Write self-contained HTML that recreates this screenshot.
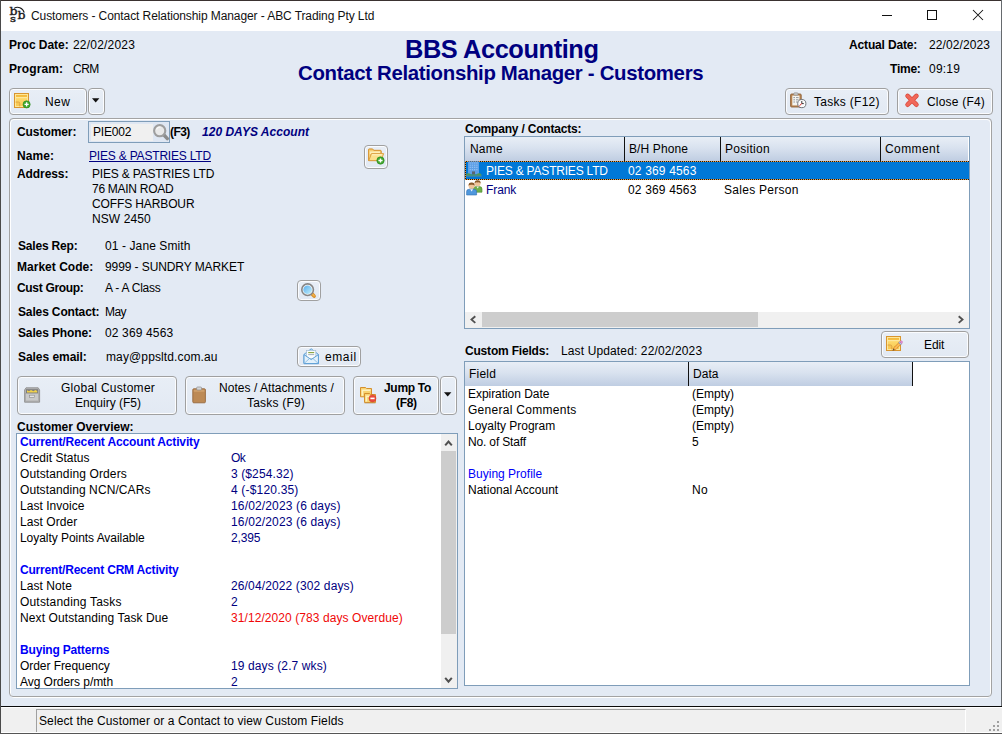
<!DOCTYPE html>
<html>
<head>
<meta charset="utf-8">
<title>Customers - Contact Relationship Manager - ABC Trading Pty Ltd</title>
<style>
*{box-sizing:border-box;margin:0;padding:0}
html,body{width:1002px;height:734px;overflow:hidden;background:#e3eaf4}
body{position:relative;font-family:"Liberation Sans",sans-serif;font-size:12px;color:#000}
.a{position:absolute}
.t{position:absolute;white-space:nowrap;line-height:14px;font-size:12px}
.b{font-weight:bold}
.nv{color:#000080}
.bl{color:#0000f8}
.rd{color:#f00808}
.btn{position:absolute;border:1px solid #a0a0a0;border-radius:4px;background:linear-gradient(#e8eef6,#e2e9f3);box-shadow:inset 0 0 0 1px #fbfcfe}
.hdr{position:absolute;background:linear-gradient(#e8eef6 0%,#d9e2ef 45%,#bfcde2 100%);border-right:1px solid #111}
.lb{position:absolute;border:1px solid #7f9db9;background:#fff}
</style>
</head>
<body>
<!-- window frame -->
<div class="a" style="left:1px;top:1px;width:1000px;height:30px;background:#fff"></div>
<div class="a" style="left:0;top:0;width:1002px;height:1px;background:#3a3230"></div>
<div class="a" style="left:0;top:0;width:1px;height:734px;background:#4a4a4a"></div>
<div class="a" style="left:1001px;top:0;width:1px;height:734px;background:#666a6e"></div>
<div class="a" style="left:0;top:733px;width:1002px;height:1px;background:#555"></div>
<!-- app icon -->
<svg class="a" style="left:9px;top:6px" width="17" height="17" viewBox="0 0 17 17" fill="#1a1a1a" stroke="#1a1a1a" stroke-width="0.35">
<g style="font-family:'DejaVu Serif',serif;font-weight:normal;font-stretch:normal">
<text transform="translate(0.6 8.6) scale(1.2 1)" style="font-size:10.4px">b</text>
<text transform="translate(8.6 12.6) scale(1.2 1)" style="font-size:10.4px">b</text>
<text transform="translate(0.9 15.7) scale(1.3 1)" style="font-size:9px">s</text>
</g>
<path d="M5 2.4 C8.4 0.2 13.8 1.2 15.2 6.6" fill="none" stroke="#1a1a1a" stroke-width="1.1"/>
</svg>
<!-- window controls -->
<div class="a" style="left:882px;top:15px;width:10px;height:1px;background:#111"></div>
<div class="a" style="left:927px;top:10px;width:10px;height:10px;border:1px solid #111"></div>
<svg class="a" style="left:972px;top:9px" width="12" height="12" viewBox="0 0 12 12"><path d="M1 1 L11 11 M11 1 L1 11" stroke="#111" stroke-width="1.05" fill="none"/></svg>

<!-- toolbar buttons -->
<div class="btn" style="left:9px;top:88px;width:78px;height:27px"></div>
<svg class="a" style="left:14px;top:93px" width="17" height="16" viewBox="0 0 17 16">
<defs><linearGradient id="ng" x1="0" y1="0" x2="0" y2="1"><stop offset="0" stop-color="#ffe27c"/><stop offset="1" stop-color="#f9c74c"/></linearGradient></defs><rect x="0.5" y="0.5" width="14" height="14" fill="url(#ng)" stroke="#d8952f"/>
<rect x="1.5" y="1.5" width="12" height="12" fill="none" stroke="#fde79a" stroke-width="1"/>
<rect x="2" y="2.2" width="11" height="1.5" fill="#f2b231"/>
<rect x="2" y="4.3" width="11" height="0.8" fill="#fdeeb4"/>
<path d="M1.6 9 H4.4 Q5.8 9 5.8 10.4 V13.4" fill="#f7c653" stroke="#dba044" stroke-width="0.9"/>
<circle cx="12.6" cy="11.4" r="3.6" fill="#3fa62c" stroke="#2f8c20" stroke-width="0.6"/>
<path d="M12.6 9.3 V13.5 M10.5 11.4 H14.7" stroke="#fff" stroke-width="1.4"/>
</svg>
<div class="btn" style="left:88px;top:88px;width:17px;height:27px"></div>
<svg class="a" style="left:92px;top:98px" width="8" height="5" viewBox="0 0 8 5"><path d="M0 0.3 H7.4 L3.7 4.4 Z" fill="#111"/></svg>
<div class="btn" style="left:785px;top:88px;width:104px;height:27px"></div>
<svg class="a" style="left:790px;top:92px" width="17" height="17" viewBox="0 0 17 17">
<rect x="0.6" y="2" width="10.6" height="13" rx="1" fill="#b98552" stroke="#8f6238" stroke-width="0.9"/>
<rect x="2.3" y="3.6" width="7.2" height="9.8" fill="#f4f4f0"/>
<rect x="3.8" y="0.8" width="4.2" height="2.4" rx="0.8" fill="#c9c9c9" stroke="#8a8a8a" stroke-width="0.6"/>
<path d="M3.4 5.6 H5 M6 5.6 H8.6 M3.4 7.8 H5 M6 7.8 H8.6 M3.4 10 H5 M6 10 H7.4" stroke="#8a8f96" stroke-width="0.9"/>
<circle cx="11.8" cy="11.6" r="4.1" fill="#fbfbfb" stroke="#6f7378" stroke-width="1"/>
<path d="M11.8 9 V11.6 H13.8" stroke="#222" stroke-width="0.9" fill="none"/>
<path d="M11.8 11.6 L9.4 13.8" stroke="#e02020" stroke-width="1"/>
</svg>
<div class="btn" style="left:897px;top:88px;width:96px;height:27px"></div>
<svg class="a" style="left:904px;top:92px" width="16" height="16" viewBox="0 0 16 16" fill="none" stroke-linecap="round"><path d="M3.6 3.9 L12.4 12.7 M12.4 3.9 L3.6 12.7" stroke="#d8473a" stroke-width="4.6"/><path d="M3.6 3.9 L12.4 12.7 M12.4 3.9 L3.6 12.7" stroke="#f0685a" stroke-width="3.2"/></svg>

<!-- main panel frame (etched) -->
<div class="a" style="left:10px;top:119px;width:981px;height:579px;border:1px solid #fff;border-radius:4px"></div>
<div class="a" style="left:9px;top:118px;width:983px;height:579px;border:1px solid #a3a3a3;border-radius:4px"></div>

<!-- customer input -->
<div class="a" style="left:88px;top:121px;width:82px;height:22px;border:1px solid #7f9db9;background:#dfe7f3"></div>
<div class="a" style="left:91px;top:124px;width:62px;height:17px;background:#f0f0f0"></div>
<svg class="a" style="left:152px;top:123px" width="18" height="18" viewBox="0 0 18 18"><path d="M12 12 L15.3 15.6" stroke="#8c8c8c" stroke-width="3.4" stroke-linecap="round"/><circle cx="7.7" cy="7.7" r="5.6" fill="#e9e9e9" stroke="#9e9e9e" stroke-width="2.1"/><path d="M4.6 6.6 A3.4 3.4 0 0 1 8.6 4.2" stroke="#f8f8f8" stroke-width="1.2" fill="none"/></svg>

<!-- folder button -->
<div class="btn" style="left:364px;top:145px;width:24px;height:24px;border-radius:4px"></div>
<svg class="a" style="left:368px;top:148px" width="17" height="17" viewBox="0 0 17 17">
<path d="M0.5 12.6 V1.8 Q0.5 1.1 1.2 1.1 H4.6 L5.8 2.4 H12.4 Q13.1 2.4 13.1 3.1 V5.2" fill="#f3c462" stroke="#d99a3c"/>
<path d="M0.5 12.6 V1.8 Q0.5 1.1 1.2 1.1 H4.6 L5.8 2.4 H12.4 Q13.1 2.4 13.1 3.1 V12.6 Z" fill="#f6cd72" stroke="#d99a3c"/>
<path d="M1.8 3.4 H12 V6 H1.8 Z" fill="#fdeeb8"/>
<path d="M0.8 12.6 L3.4 5.6 H15.6 L13.2 12.6 Z" fill="#fbe08c" stroke="#dca040" stroke-linejoin="round"/>
<path d="M3.9 6.8 H14.2" stroke="#fff3c8" stroke-width="1"/>
<circle cx="12.5" cy="12.5" r="3.7" fill="#3fa62c" stroke="#2d8a1e" stroke-width="0.6"/>
<path d="M12.5 10.4 V14.6 M10.4 12.5 H14.6" stroke="#fff" stroke-width="1.4"/>
</svg>

<!-- search button -->
<div class="btn" style="left:297px;top:280px;width:24px;height:21px;border-radius:4px"></div>
<svg class="a" style="left:300px;top:281px" width="18" height="18" viewBox="0 0 18 18">
<defs><linearGradient id="lg" x1="0" y1="0" x2="1" y2="1"><stop offset="0" stop-color="#58aeee"/><stop offset="1" stop-color="#c4f0fa"/></linearGradient></defs>
<path d="M12.4 13.2 L14.1 15.1" stroke="#d8902c" stroke-width="3.6" stroke-linecap="round"/>
<path d="M12.8 13.5 L14 14.8" stroke="#f4b44a" stroke-width="1.6" stroke-linecap="round"/>
<circle cx="7.6" cy="8.7" r="5.8" fill="#f6f6f6" stroke="#868686" stroke-width="1.6"/>
<circle cx="7.6" cy="8.7" r="4.3" fill="url(#lg)"/>
</svg>

<!-- email button -->
<div class="btn" style="left:297px;top:346px;width:64px;height:21px;border-radius:4px"></div>
<svg class="a" style="left:303px;top:348px" width="17" height="17" viewBox="0 0 17 17">
<path d="M1 6.4 L8.2 0.8 L15.4 6.4 V15.6 H1 Z" fill="#cfe6f8" stroke="#5d9fd6" stroke-width="1"/>
<rect x="3.6" y="2.6" width="9.2" height="8" fill="#fafcfd" stroke="#9fb9cf" stroke-width="0.6"/>
<path d="M5.2 4.6 H11.2" stroke="#8aa23a" stroke-width="1.1"/>
<path d="M5.2 6.6 H11.2" stroke="#9aa7b3" stroke-width="0.9"/>
<path d="M1 6.6 L8.2 11.6 L15.4 6.6 V15.6 H1 Z" fill="#e3f1fb" stroke="#5d9fd6" stroke-width="1" stroke-linejoin="round"/>
<path d="M1.4 15.2 L6.4 10.6 M15 15.2 L10 10.6" stroke="#7db4e0" stroke-width="0.8"/>
</svg>

<!-- big buttons -->
<div class="btn" style="left:17px;top:376px;width:160px;height:39px"></div>
<svg class="a" style="left:24px;top:387px" width="17" height="16" viewBox="0 0 17 16">
<path d="M0.6 3 L2 0.8 H14.2 L15.6 3 V15.2 H0.6 Z" fill="#b5b5b5" stroke="#8e8e8e" stroke-width="0.9"/>
<rect x="2" y="2.2" width="12.2" height="4.2" fill="#7d7d7d"/>
<path d="M3 5.6 V3.2 L5 4.2 L7 3 L9.4 4.2 L11.4 3 L13.2 4 V5.6 Z" fill="#f2d24a"/>
<rect x="1.6" y="6.4" width="13" height="7.6" fill="#c9c9c9" stroke="#a2a2a2" stroke-width="0.6"/>
<rect x="5.6" y="8.2" width="5" height="2.2" fill="#e6e6e6" stroke="#8a8a8a" stroke-width="0.6"/>
</svg>
<div class="btn" style="left:185px;top:376px;width:160px;height:39px"></div>
<svg class="a" style="left:192px;top:386px" width="15" height="18" viewBox="0 0 15 18">
<rect x="0.8" y="2.8" width="12.6" height="14" rx="1" fill="#bd8a55" stroke="#96683c" stroke-width="0.9"/>
<rect x="1.8" y="3.8" width="10.6" height="2" fill="#cfa06c"/>
<rect x="4.6" y="1" width="5" height="3" rx="1" fill="#d6d6d6" stroke="#8d8d8d" stroke-width="0.7"/>
</svg>
<div class="btn" style="left:353px;top:376px;width:86px;height:39px"></div>
<svg class="a" style="left:360px;top:387px" width="17" height="17" viewBox="0 0 17 17">
<path d="M0.5 9.8 V0.5 H5.6 L6.6 1.5 H11.5 V9.8 Z" fill="#f8d370" stroke="#d5902e"/>
<path d="M1.6 2.6 H10.4 V4 H3.2 V8.8 H1.6 Z" fill="#fdf1c0"/>
<path d="M4.5 15.5 V6.5 H9.6 L10.6 7.5 H15.5 V15.5 Z" fill="#f8d370" stroke="#d5902e"/>
<path d="M5.6 8.6 H14.4 V10 H7.2 V14.6 H5.6 Z" fill="#fdf1c0"/>
<path d="M4.5 16.2 H15.5" stroke="#b8a078" stroke-width="0.6"/>
<circle cx="12.5" cy="11.4" r="3.5" fill="#e94b3c" stroke="#d23a2c" stroke-width="0.5"/>
<path d="M10.4 11.4 H14.6" stroke="#fff" stroke-width="1.6"/>
</svg>
<div class="btn" style="left:440px;top:376px;width:17px;height:39px"></div>
<svg class="a" style="left:444px;top:392px" width="8" height="5" viewBox="0 0 8 5"><path d="M0 0.3 H7.4 L3.7 4.4 Z" fill="#111"/></svg>

<!-- overview list -->
<div class="lb" style="left:16px;top:433px;width:442px;height:256px"></div>
<div class="a" style="left:441px;top:434px;width:16px;height:254px;background:#f0f0f0"></div>
<div class="a" style="left:441px;top:451px;width:15px;height:183px;background:#cdcdcd"></div>
<svg class="a" style="left:444px;top:439px" width="9" height="8" viewBox="0 0 9 8"><path d="M1.2 6.3 L4.5 2.5 L7.8 6.3" fill="none" stroke="#505050" stroke-width="2"/></svg>
<svg class="a" style="left:444px;top:676px" width="9" height="8" viewBox="0 0 9 8"><path d="M1.2 1.9 L4.5 5.7 L7.8 1.9" fill="none" stroke="#505050" stroke-width="2"/></svg>

<!-- contacts list -->
<div class="lb" style="left:464px;top:136px;width:506px;height:193px"></div>
<div class="hdr" style="left:465px;top:137px;width:160px;height:24px"></div>
<div class="hdr" style="left:625px;top:137px;width:96px;height:24px"></div>
<div class="hdr" style="left:721px;top:137px;width:160px;height:24px"></div>
<div class="hdr" style="left:881px;top:137px;width:87px;height:24px;border-right:0"></div>
<div class="a" style="left:465px;top:161px;width:504px;height:19px;background:#0078d7"></div>
<div class="a" style="left:465px;top:161px;width:504px;height:1px;background:repeating-linear-gradient(90deg,#f0a040 0 1px,#201810 1px 2px)"></div><div class="a" style="left:465px;top:179px;width:504px;height:1px;background:repeating-linear-gradient(90deg,#f0a040 0 1px,#201810 1px 2px)"></div><div class="a" style="left:465px;top:161px;width:1px;height:19px;background:repeating-linear-gradient(180deg,#f0a040 0 1px,#201810 1px 2px)"></div>
<!-- building icon -->
<svg class="a" style="left:466px;top:161px" width="16" height="16" viewBox="0 0 16 16">
<rect x="2" y="0.4" width="11" height="13" fill="#5e9fe6"/>
<path d="M3.6 2 H11.6 M3.6 4.2 H11.6 M3.6 6.4 H11.6 M3.6 8.6 H11.6" stroke="#8fc0f4" stroke-width="1.1" stroke-dasharray="1.3 0.9"/>
<rect x="6" y="10.4" width="3" height="3.2" fill="#5b6470"/>
<path d="M0 15.4 V13.6 Q1.6 11.6 3.6 12.6 L5 13.6 H10.4 L11.8 12.6 Q13.8 11.6 15.4 13.6 V15.4 Z" fill="#4e9a58"/>
<rect x="0" y="14.6" width="15.6" height="1" fill="#3d7fc4"/>
</svg>
<!-- people icon -->
<svg class="a" style="left:466px;top:179px" width="17" height="17" viewBox="0 0 17 17">
<circle cx="11.6" cy="4.6" r="2.9" fill="#f0c49a"/>
<path d="M8.6 4.4 Q8.6 1 11.6 1.2 Q14.8 1 14.6 4.4 Q13 2.8 11.6 3.4 Q10 2.8 8.6 4.4 Z" fill="#8a5a2a"/>
<path d="M7.4 13.2 V10 Q7.4 7.6 10 7.6 H13.4 Q16 7.6 16 10 V13.2 Z" fill="#6fb04a" stroke="#4e8a30" stroke-width="0.6"/>
<path d="M10.4 7.6 L11.7 9.6 L13 7.6 Z" fill="#f4f7f0"/>
<circle cx="5.6" cy="7" r="3" fill="#f0c49a"/>
<path d="M2.5 6.8 Q2.4 3.2 5.6 3.4 Q8.8 3.2 8.7 6.8 Q7 5.2 5.6 5.8 Q4 5.2 2.5 6.8 Z" fill="#8a5a2a"/>
<path d="M0.6 16 V12.6 Q0.6 10.2 3.4 10.2 H7.8 Q10.6 10.2 10.6 12.6 V16 Z" fill="#4f97dc" stroke="#2f6fb4" stroke-width="0.6"/>
<path d="M4.2 10.2 L5.6 12.4 L7 10.2 Z" fill="#f2f6fb"/>
</svg>
<!-- h scrollbar -->
<div class="a" style="left:465px;top:312px;width:504px;height:16px;background:#f0f0f0"></div>
<div class="a" style="left:482px;top:312px;width:276px;height:15px;background:#cdcdcd"></div>
<svg class="a" style="left:469px;top:315px" width="8" height="10" viewBox="0 0 8 10"><path d="M6.3 1.3 L2.5 4.6 L6.3 7.9" fill="none" stroke="#505050" stroke-width="1.9"/></svg>
<svg class="a" style="left:957px;top:315px" width="8" height="10" viewBox="0 0 8 10"><path d="M1.7 1.3 L5.5 4.6 L1.7 7.9" fill="none" stroke="#505050" stroke-width="1.9"/></svg>

<!-- custom fields -->
<div class="btn" style="left:881px;top:331px;width:88px;height:27px"></div>
<svg class="a" style="left:886px;top:336px" width="18" height="16" viewBox="0 0 18 16">
<defs><linearGradient id="ng2" x1="0" y1="0" x2="0" y2="1"><stop offset="0" stop-color="#ffe27c"/><stop offset="1" stop-color="#f9c74c"/></linearGradient></defs><rect x="0.5" y="0.5" width="14" height="14" fill="url(#ng2)" stroke="#d8952f"/>
<rect x="1.5" y="1.5" width="12" height="12" fill="none" stroke="#fde79a" stroke-width="1"/>
<rect x="2" y="2.2" width="11" height="1.5" fill="#f2b231"/>
<rect x="2" y="4.3" width="11" height="0.8" fill="#fdeeb4"/>
<path d="M1.6 9 H4.4 Q5.8 9 5.8 10.4 V13.4" fill="#f7c653" stroke="#dba044" stroke-width="0.9"/>
<path d="M6.6 14.6 L7.6 11.8 L13.4 6 L15.4 8 L9.6 13.8 Z" fill="#f7a83a" stroke="#b06e24" stroke-width="0.7" stroke-dasharray="0.9 0.7"/>
<path d="M8.8 12.6 L14.2 7.2" stroke="#fbc261" stroke-width="1.1"/>
<path d="M12.7 6.7 L13.7 5.7 L15.7 7.7 L14.7 8.7 Z" fill="#b9c7e6" stroke="#5f78b8" stroke-width="0.5"/>
<path d="M13.7 5.7 L14.5 4.9 Q15.3 4.3 16.1 5.1 Q16.9 5.9 16.3 6.9 L15.7 7.7 Z" fill="#e38fd2" stroke="#c070b4" stroke-width="0.4"/>
<path d="M6.6 14.6 L7.4 12.4 L8.9 13.9 Z" fill="#5a5040"/>
</svg>
<div class="lb" style="left:464px;top:361px;width:506px;height:325px"></div>
<div class="hdr" style="left:465px;top:362px;width:224px;height:24px"></div>
<div class="hdr" style="left:689px;top:362px;width:224px;height:24px"></div>

<!-- status bar -->
<div class="a" style="left:1px;top:706px;width:1001px;height:1px;background:#0a0a0a"></div>
<div class="a" style="left:1px;top:707px;width:1001px;height:26px;background:#f0f0f0;border-top:1px solid #fff;border-bottom:1px solid #fff"></div>
<div class="a" style="left:36px;top:709px;width:930px;height:23px;border-left:1px solid #a0a0a0;border-top:1px solid #a0a0a0;border-right:1px solid #fff"></div>
<svg class="a" style="left:989px;top:721px" width="12" height="12" viewBox="0 0 12 12" fill="#a0a0a0"><rect x="8" y="0" width="2" height="2"/><rect x="4" y="4" width="2" height="2"/><rect x="8" y="4" width="2" height="2"/><rect x="0" y="8" width="2" height="2"/><rect x="4" y="8" width="2" height="2"/><rect x="8" y="8" width="2" height="2"/></svg>

<div class="t" style="left:31px;top:8px;letter-spacing:-0.09px;line-height:16px;color:#111">Customers - Contact Relationship Manager - ABC Trading Pty Ltd</div>
<div class="t b" style="left:9px;top:38px;letter-spacing:-0.04px">Proc Date:</div>
<div class="t" style="left:73px;top:38px;letter-spacing:0.20px">22/02/2023</div>
<div class="t b" style="left:9px;top:62px;letter-spacing:0.08px">Program:</div>
<div class="t" style="left:73px;top:62px;letter-spacing:-0.54px">CRM</div>
<div class="t b nv" style="left:405px;top:35px;letter-spacing:-0.42px;font-size:25.4px;line-height:29px">BBS Accounting</div>
<div class="t b nv" style="left:298px;top:61px;letter-spacing:-0.32px;font-size:20.4px;line-height:24px">Contact Relationship Manager - Customers</div>
<div class="t b" style="left:849px;top:38px;letter-spacing:-0.15px">Actual Date:</div>
<div class="t" style="left:929px;top:38px;letter-spacing:0.10px">22/02/2023</div>
<div class="t b" style="left:890px;top:62px;letter-spacing:-0.23px">Time:</div>
<div class="t" style="left:929px;top:62px;letter-spacing:0.23px">09:19</div>
<div class="t" style="left:45px;top:95px;letter-spacing:0.45px">New</div>
<div class="t" style="left:814px;top:95px;letter-spacing:0.29px">Tasks (F12)</div>
<div class="t" style="left:927px;top:95px;letter-spacing:0.20px">Close (F4)</div>
<div class="t b" style="left:17px;top:125px;letter-spacing:-0.07px">Customer:</div>
<div class="t" style="left:93px;top:125px;letter-spacing:-0.18px">PIE002</div>
<div class="t b" style="left:170px;top:125px;letter-spacing:-0.55px">(F3)</div>
<div class="t b nv" style="left:202px;top:125px;letter-spacing:0.02px;font-style:italic">120 DAYS Account</div>
<div class="t b" style="left:17px;top:149px;letter-spacing:0.09px">Name:</div>
<div class="t nv" style="left:89px;top:149px;letter-spacing:-0.19px;text-decoration:underline">PIES &amp; PASTRIES LTD</div>
<div class="t b" style="left:17px;top:167px;letter-spacing:-0.08px">Address:</div>
<div class="t" style="left:92px;top:167px;letter-spacing:-0.18px">PIES &amp; PASTRIES LTD</div>
<div class="t" style="left:92px;top:182px;letter-spacing:-0.28px">76 MAIN ROAD</div>
<div class="t" style="left:92px;top:197px;letter-spacing:-0.12px">COFFS HARBOUR</div>
<div class="t" style="left:92px;top:212px;letter-spacing:0.08px">NSW 2450</div>
<div class="t b" style="left:18px;top:239px;letter-spacing:-0.18px">Sales Rep:</div>
<div class="t" style="left:105px;top:239px;letter-spacing:0.10px">01 - Jane Smith</div>
<div class="t b" style="left:17px;top:260px;letter-spacing:0.02px">Market Code:</div>
<div class="t" style="left:105px;top:260px;letter-spacing:-0.09px">9999 - SUNDRY MARKET</div>
<div class="t b" style="left:17px;top:281px;letter-spacing:-0.32px">Cust Group:</div>
<div class="t" style="left:105px;top:281px;letter-spacing:-0.22px">A - A Class</div>
<div class="t b" style="left:18px;top:305px;letter-spacing:-0.14px">Sales Contact:</div>
<div class="t" style="left:105px;top:305px;letter-spacing:-0.60px">May</div>
<div class="t b" style="left:18px;top:326px;letter-spacing:-0.13px">Sales Phone:</div>
<div class="t" style="left:105px;top:326px;letter-spacing:0.14px">02 369 4563</div>
<div class="t b" style="left:18px;top:350px;letter-spacing:-0.05px">Sales email:</div>
<div class="t" style="left:106px;top:350px;letter-spacing:0.12px">may@ppsltd.com.au</div>
<div class="t" style="left:325px;top:350px;letter-spacing:0.60px">email</div>
<div class="t" style="left:61px;top:381px;letter-spacing:0.27px">Global Customer</div>
<div class="t" style="left:75px;top:396px">Enquiry (F5)</div>
<div class="t" style="left:219px;top:381px;letter-spacing:0.04px">Notes / Attachments /</div>
<div class="t" style="left:247px;top:396px;letter-spacing:0.20px">Tasks (F9)</div>
<div class="t b" style="left:384px;top:381px;letter-spacing:-0.30px">Jump To</div>
<div class="t b" style="left:396px;top:396px;letter-spacing:-0.30px">(F8)</div>
<div class="t b" style="left:17px;top:420px;letter-spacing:-0.01px">Customer Overview:</div>
<div class="t b bl" style="left:20px;top:435px;letter-spacing:-0.14px">Current/Recent Account Activity</div>
<div class="t" style="left:20px;top:451px;letter-spacing:0.01px">Credit Status</div>
<div class="t nv" style="left:231px;top:451px;letter-spacing:-0.60px">Ok</div>
<div class="t" style="left:20px;top:467px;letter-spacing:0.12px">Outstanding Orders</div>
<div class="t nv" style="left:231px;top:467px;letter-spacing:0.11px">3 ($254.32)</div>
<div class="t" style="left:20px;top:483px;letter-spacing:0.09px">Outstanding NCN/CARs</div>
<div class="t nv" style="left:231px;top:483px;letter-spacing:0.18px">4 (-$120.35)</div>
<div class="t" style="left:20px;top:499px;letter-spacing:0.03px">Last Invoice</div>
<div class="t nv" style="left:231px;top:499px;letter-spacing:0.15px">16/02/2023 (6 days)</div>
<div class="t" style="left:20px;top:515px;letter-spacing:0.06px">Last Order</div>
<div class="t nv" style="left:231px;top:515px;letter-spacing:0.15px">16/02/2023 (6 days)</div>
<div class="t" style="left:20px;top:531px;letter-spacing:-0.05px">Loyalty Points Available</div>
<div class="t nv" style="left:231px;top:531px;letter-spacing:-0.14px">2,395</div>
<div class="t b bl" style="left:20px;top:563px;letter-spacing:-0.19px">Current/Recent CRM Activity</div>
<div class="t" style="left:20px;top:579px;letter-spacing:0.07px">Last Note</div>
<div class="t nv" style="left:231px;top:579px;letter-spacing:0.13px">26/04/2022 (302 days)</div>
<div class="t" style="left:20px;top:595px;letter-spacing:0.18px">Outstanding Tasks</div>
<div class="t nv" style="left:231px;top:595px">2</div>
<div class="t" style="left:20px;top:611px;letter-spacing:0.10px">Next Outstanding Task Due</div>
<div class="t rd" style="left:231px;top:611px;letter-spacing:0.08px">31/12/2020 (783 days Overdue)</div>
<div class="t b bl" style="left:20px;top:643px;letter-spacing:-0.18px">Buying Patterns</div>
<div class="t" style="left:20px;top:659px;letter-spacing:-0.06px">Order Frequency</div>
<div class="t nv" style="left:231px;top:659px;letter-spacing:0.11px">19 days (2.7 wks)</div>
<div class="t" style="left:20px;top:675px;letter-spacing:-0.05px">Avg Orders p/mth</div>
<div class="t nv" style="left:231px;top:675px">2</div>
<div class="t b" style="left:465px;top:122px;letter-spacing:-0.20px">Company / Contacts:</div>
<div class="t" style="left:470px;top:142px;letter-spacing:0.18px">Name</div>
<div class="t" style="left:629px;top:142px;letter-spacing:0.11px">B/H Phone</div>
<div class="t" style="left:725px;top:142px;letter-spacing:0.28px">Position</div>
<div class="t" style="left:885px;top:142px;letter-spacing:0.42px">Comment</div>
<div class="t" style="left:486px;top:164px;letter-spacing:-0.20px;color:#fff">PIES &amp; PASTRIES LTD</div>
<div class="t" style="left:628px;top:164px;letter-spacing:0.16px;color:#fff">02 369 4563</div>
<div class="t nv" style="left:486px;top:183px;letter-spacing:-0.09px">Frank</div>
<div class="t" style="left:628px;top:183px;letter-spacing:0.16px">02 369 4563</div>
<div class="t" style="left:724px;top:183px;letter-spacing:0.28px">Sales Person</div>
<div class="t b" style="left:465px;top:344px;letter-spacing:-0.19px">Custom Fields:</div>
<div class="t" style="left:561px;top:344px;letter-spacing:0.13px">Last Updated: 22/02/2023</div>
<div class="t" style="left:924px;top:338px;letter-spacing:-0.12px">Edit</div>
<div class="t" style="left:469px;top:367px;letter-spacing:0.23px">Field</div>
<div class="t" style="left:693px;top:367px;letter-spacing:0.06px">Data</div>
<div class="t" style="left:468px;top:387px;letter-spacing:-0.05px">Expiration Date</div>
<div class="t" style="left:692px;top:387px">(Empty)</div>
<div class="t" style="left:468px;top:403px;letter-spacing:0.28px">General Comments</div>
<div class="t" style="left:692px;top:403px">(Empty)</div>
<div class="t" style="left:468px;top:419px;letter-spacing:-0.01px">Loyalty Program</div>
<div class="t" style="left:692px;top:419px">(Empty)</div>
<div class="t" style="left:468px;top:435px;letter-spacing:-0.16px">No. of Staff</div>
<div class="t" style="left:692px;top:435px">5</div>
<div class="t bl" style="left:468px;top:467px;letter-spacing:0.01px">Buying Profile</div>
<div class="t" style="left:468px;top:483px;letter-spacing:0.01px">National Account</div>
<div class="t" style="left:692px;top:483px;letter-spacing:0.36px">No</div>
<div class="t" style="left:39px;top:714px;letter-spacing:0.12px">Select the Customer or a Contact to view Custom Fields</div>
</body>
</html>
